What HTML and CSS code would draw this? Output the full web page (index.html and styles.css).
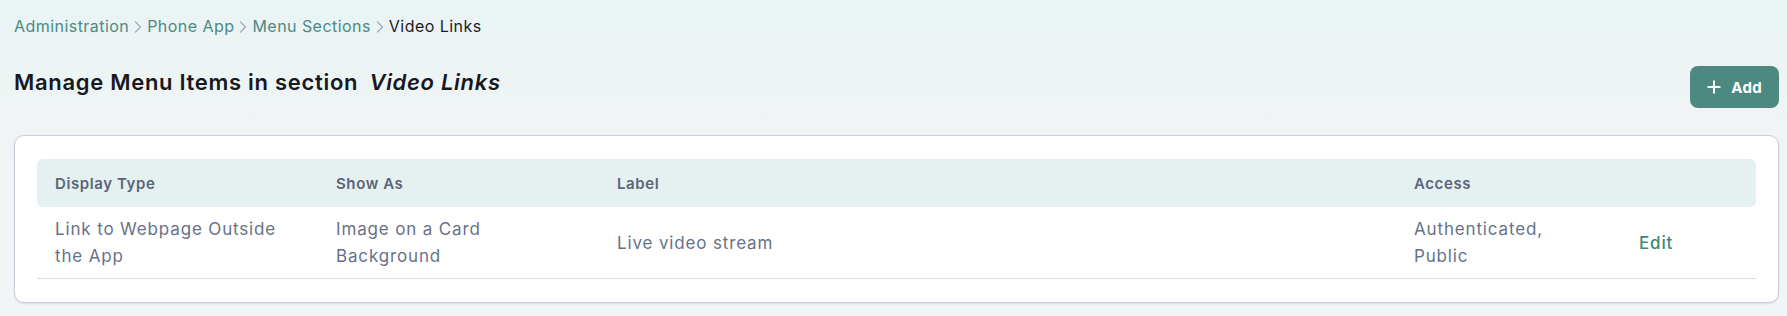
FILE: index.html
```html
<!DOCTYPE html>
<html lang="en">
<head>
<meta charset="utf-8">
<title>Manage Menu Items</title>
<link rel="stylesheet" href="styles.css">
</head>
<body>
<div class="page">
  <nav class="crumbs">
    <a class="crumb-link" href="#">Administration</a>
    <svg class="chev" width="8" height="12" viewBox="0 0 8 12"><path d="M1.5 1 L6.5 6 L1.5 11" fill="none" stroke="#a9aec0" stroke-width="1.5" stroke-linecap="round" stroke-linejoin="round"/></svg>
    <a class="crumb-link" href="#">Phone App</a>
    <svg class="chev" width="8" height="12" viewBox="0 0 8 12"><path d="M1.5 1 L6.5 6 L1.5 11" fill="none" stroke="#a9aec0" stroke-width="1.5" stroke-linecap="round" stroke-linejoin="round"/></svg>
    <a class="crumb-link" href="#">Menu Sections</a>
    <svg class="chev" width="8" height="12" viewBox="0 0 8 12"><path d="M1.5 1 L6.5 6 L1.5 11" fill="none" stroke="#a9aec0" stroke-width="1.5" stroke-linecap="round" stroke-linejoin="round"/></svg>
    <span class="crumb-current">Video Links</span>
  </nav>

  <div class="head">
    <h1 class="title">Manage Menu Items in section <em class="title-em">Video Links</em></h1>
    <button class="add-btn" type="button">
      <svg class="plus" width="14" height="14" viewBox="0 0 14 14"><path d="M7 0.5 V13.5 M0.5 7 H13.5" stroke="#fff" stroke-width="2"/></svg>
      <span>Add</span>
    </button>
  </div>

  <div class="card">
    <table class="tbl">
      <colgroup>
        <col class="c1"><col class="c2"><col class="c3"><col class="c4"><col class="c5">
      </colgroup>
      <thead>
        <tr>
          <th>Display Type</th>
          <th>Show As</th>
          <th>Label</th>
          <th>Access</th>
          <th></th>
        </tr>
      </thead>
      <tbody>
        <tr>
          <td>Link to Webpage Outside the App</td>
          <td>Image on a Card Background</td>
          <td>Live video stream</td>
          <td class="access">Authenticated, Public</td>
          <td><a class="edit" href="#">Edit</a></td>
        </tr>
      </tbody>
    </table>
  </div>
</div>
</body>
</html>
```
FILE: styles.css
```css
html, body {
  margin: 0;
  padding: 0;
}
body {
  font-family: Inter, "Noto Sans", sans-serif;
  background: linear-gradient(180deg, #eaf4f4 0px, #eef4f4 90px, #f2f3f4 140px, #f3f4f5 316px);
  min-height: 316px;
  color: #1c1c27;
}
.page {
  padding: 14px 8px 0 14px;
}
.crumbs {
  display: flex;
  align-items: center;
  gap: 5px;
  height: 24px;
  font-size: 16px;
  line-height: 24px;
  letter-spacing: 0.45px;
}
.crumb-link {
  color: #4b8a83;
  text-decoration: none;
}
.crumb-current {
  color: #1c1c27;
}
.chev {
  display: block;
  margin-top: 1px;
}
.head {
  display: flex;
  justify-content: space-between;
  align-items: flex-start;
  margin-top: 28px;
}
.title {
  margin: 0;
  font-size: 22px;
  line-height: 32px;
  font-weight: 600;
  letter-spacing: 0.7px;
  color: #181822;
}
.title-em {
  font-style: italic;
  margin-left: 5px;
}
.add-btn {
  display: flex;
  align-items: center;
  gap: 10px;
  height: 42px;
  padding: 0 17px;
  border: 0;
  border-radius: 8px;
  background: #4b8981;
  color: #fff;
  font-family: Inter, "Noto Sans", sans-serif;
  font-size: 15px;
  font-weight: 700;
  letter-spacing: 0.3px;
}
.plus {
  display: block;
}
.card {
  margin-top: 27px;
  background: #fff;
  border: 1px solid #cbcdda;
  border-radius: 10px;
  box-shadow: 0 1px 2px rgba(60, 60, 90, 0.12);
  padding: 23px 22px 23px 22px;
}
.tbl {
  width: 100%;
  table-layout: fixed;
  border-collapse: separate;
  border-spacing: 0;
}
.c1 { width: 281px; }
.c2 { width: 281px; }
.c3 { width: auto; }
.c4 { width: 225px; }
.c5 { width: 135px; }
.tbl th {
  background: #e5f0f0;
  height: 48px;
  padding: 0 18px;
  text-align: left;
  font-size: 15px;
  font-weight: 600;
  letter-spacing: 0.6px;
  color: #5b6479;
  vertical-align: middle;
}
.tbl th:first-child {
  border-radius: 6px 0 0 6px;
}
.tbl th:last-child {
  border-radius: 0 6px 6px 0;
}
.tbl td {
  padding: 9px 18px 8px 18px;
  font-size: 17px;
  line-height: 27px;
  letter-spacing: 0.85px;
  color: #68718a;
  border-bottom: 1px solid #dcdde2;
  vertical-align: middle;
}
.tbl td.access {
  padding-right: 40px;
}
.edit {
  color: #3f867e;
  text-decoration: none;
  font-weight: 500;
  font-size: 17px;
}
```
